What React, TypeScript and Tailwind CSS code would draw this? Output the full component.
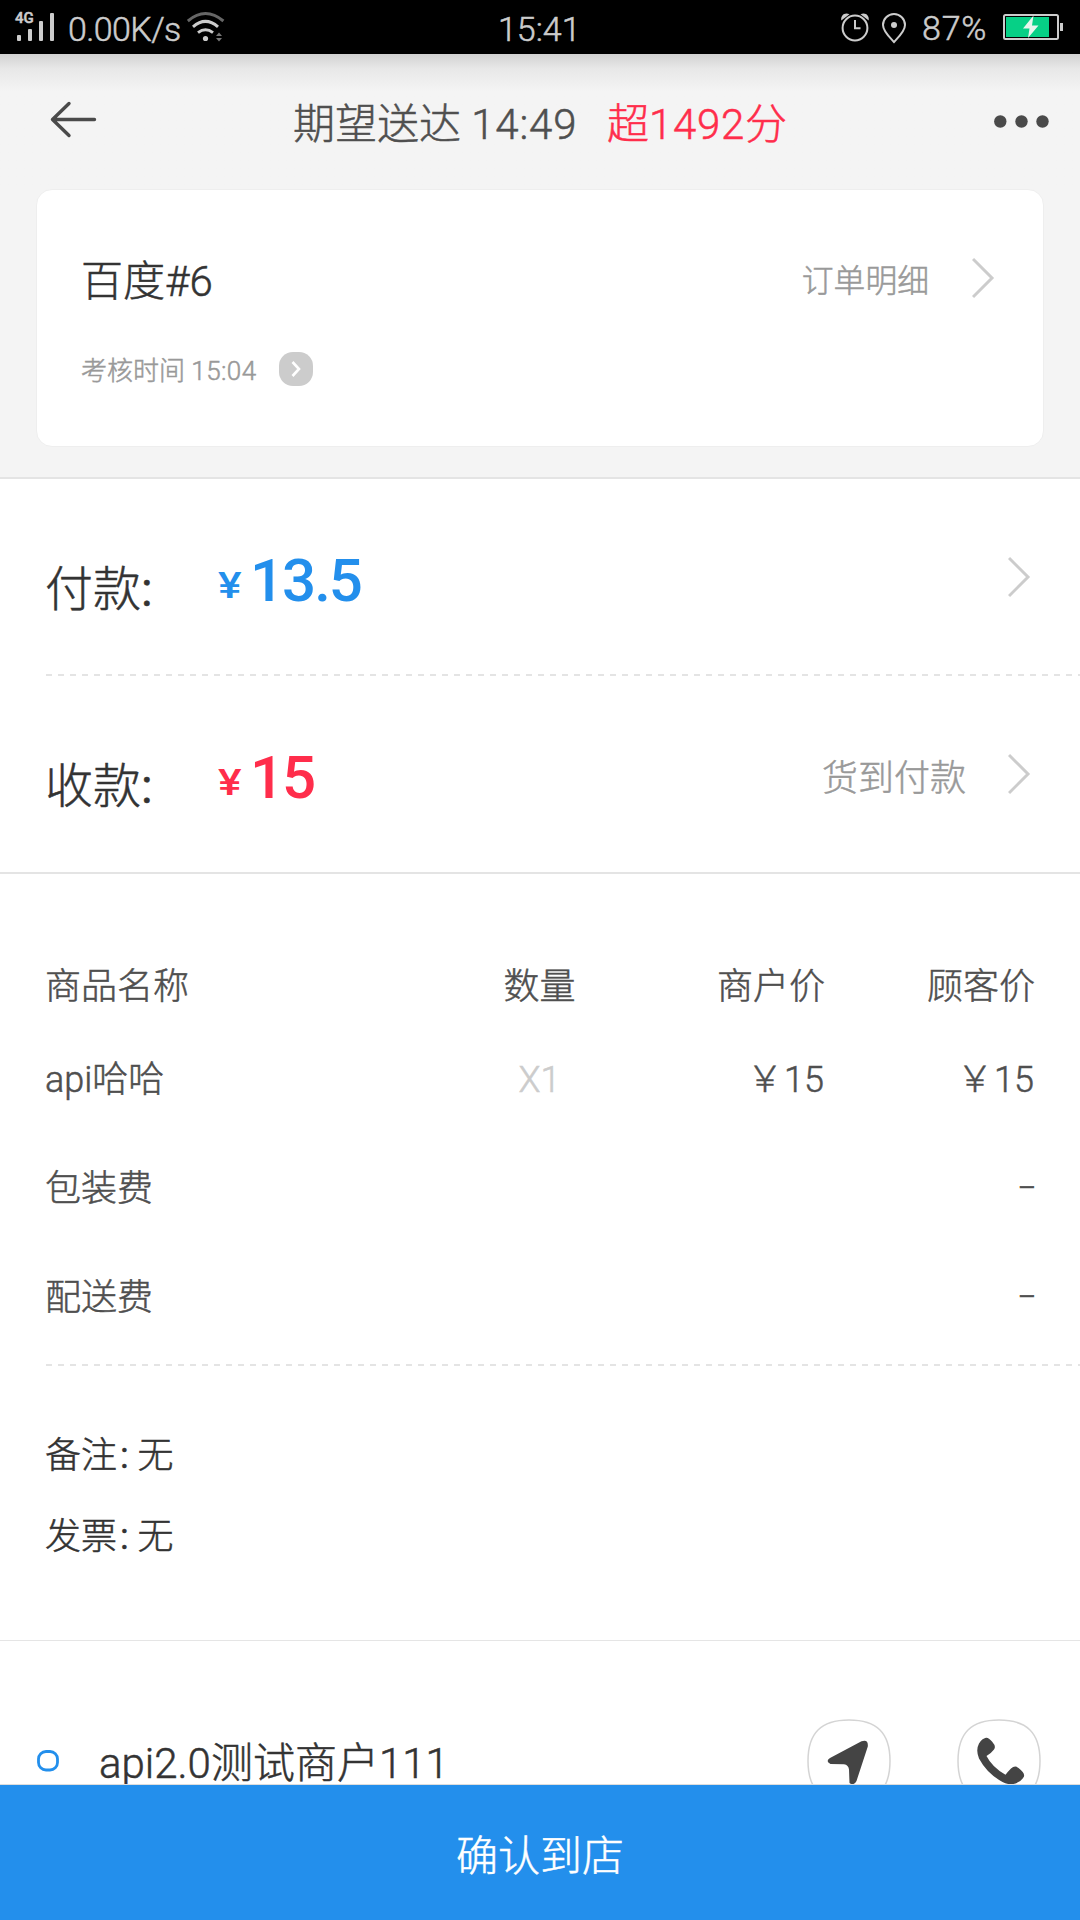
import React from "react";

function Chevron() {
  return (
    <svg width="23" height="42" viewBox="0 0 23 42" fill="none" stroke="#cccccc" strokeWidth="3">
      <path d="M1 2 L20 21 L1 40" />
    </svg>
  );
}

function SignalIcon() {
  return (
    <svg className="absolute left-0 top-0" width="60" height="54" viewBox="0 0 60 54" fill="#cccccc">
      <rect x="17" y="35" width="4" height="6" rx="1" />
      <rect x="28" y="29" width="4" height="12" rx="1" />
      <rect x="39" y="21" width="4" height="20" rx="1" />
      <rect x="50" y="13" width="4" height="28" rx="1" />
    </svg>
  );
}

function WifiIcon() {
  return (
    <svg width="38" height="54" viewBox="187 0 38 54" fill="none" stroke="#cccccc" strokeWidth="3">
      <path d="M187.8 21 Q205.5 6 223.4 21" stroke="#666666" />
      <path d="M193 26.8 Q205.5 16 218 26.8" />
      <path d="M198 32.6 Q205.5 27 213 32.6" />
      <circle cx="205.5" cy="38.5" r="2.6" fill="#cccccc" stroke="none" />
      <path d="M216 36 L219 32.6 L222 36Z M216 38 L219 41.4 L222 38Z" fill="#777777" stroke="none" />
    </svg>
  );
}

function AlarmIcon() {
  return (
    <svg width="30" height="54" viewBox="840 0 30 54" fill="none" stroke="#cccccc" strokeWidth="2">
      <circle cx="855" cy="28" r="12.4" />
      <path d="M855 20 V28.3 H860.5" />
      <path d="M841.3 20.5 C840.5 15 845 12 849.5 14.3 Z M868.7 20.5 C869.5 15 865 12 860.5 14.3 Z" fill="#cccccc" stroke="none" />
    </svg>
  );
}

function PinIcon() {
  return (
    <svg width="26" height="54" viewBox="881 0 26 54" fill="none" stroke="#cccccc" strokeWidth="2">
      <path d="M894 42 C890.5 38 883 31.5 883 25 A11 11 0 0 1 905 25 C905 31.5 897.5 38 894 42Z" />
      <circle cx="894" cy="25" r="3" fill="#cccccc" stroke="none" />
    </svg>
  );
}

function BatteryIcon() {
  return (
    <svg className="-ml-[1px]" width="62" height="54" viewBox="1003 0 62 54">
      <rect x="1005" y="15" width="54" height="24" rx="1.5" fill="none" stroke="#cccccc" strokeWidth="2" />
      <rect x="1007" y="17" width="43" height="20" fill="#06d086" />
      <rect x="1061" y="23" width="3" height="8" fill="#cccccc" />
      <path d="M1034.5 15.5 L1024 28.5 H1030.5 L1029 38 L1039.5 25.5 H1033Z" fill="#e8f5ee" />
    </svg>
  );
}

function StatusBar() {
  return (
    <div className="relative flex h-[54px] items-center bg-black text-[34px] leading-[54px] text-[#cccccc]">
      <SignalIcon />
      <span className="absolute left-[15px] top-[9px] text-[15px] leading-[18px] font-medium">4G</span>
      <span className="ml-[68px] mt-[3px] w-[119px] whitespace-nowrap tracking-[-0.6px]">0.00K/s</span>
      <WifiIcon />
      <span className="ml-[273px] mt-[4px] w-[101px]">15:41</span>
      <span className="ml-[241px] flex">
        <AlarmIcon />
      </span>
      <span className="ml-[11px]">
        <PinIcon />
      </span>
      <span className="ml-[15px] mt-[1px] w-[81px] text-[34px] tracking-[0.8px]">87%</span>
      <BatteryIcon />
    </div>
  );
}

function Header() {
  return (
    <div className="flex h-[135px] items-start bg-linear-to-b from-[#d2d2d2] via-[#e8e8e8] via-[11%] to-[#f4f4f4] to-[28%]">
      <svg className="ml-[50px] mt-[46px]" width="48" height="40" viewBox="0 0 48 40" fill="none" stroke="#4a4a4a" strokeWidth="3.4" strokeLinecap="round" strokeLinejoin="round">
        <path d="M44.5 19.5 H2.5 M19 3.5 L2.5 19.5 L19 35.5" />
      </svg>
      <div className="ml-[195px] mt-[46px] w-[314px] whitespace-nowrap text-[42px] leading-[50px] text-[#4f4f4f]">
        期望送达 <span className="tracking-[0.8px]">14:49</span>
      </div>
      <div className="mt-[46px] w-[378px] text-[42px] leading-[50px] text-[#ff2d4b]">
        超<span className="tracking-[0.7px]">1492</span>分
      </div>
      <svg className="mt-[60px]" width="66" height="16" viewBox="0 0 66 16" fill="#4a4a4a">
        <circle cx="15.3" cy="7.5" r="6.2" />
        <circle cx="36.5" cy="7.5" r="6.2" />
        <circle cx="57.5" cy="7.5" r="6.2" />
      </svg>
    </div>
  );
}

function OrderCard() {
  return (
    <div className="mx-[36px] h-[258px] rounded-[16px] border border-[#eeeeee] bg-white pl-[44px] pr-[48px] pt-[67px]">
      <div className="flex h-[50px] items-center">
        <span className="text-[42px] leading-[50px] text-[#333333]">百度#6</span>
        <span className="-mt-[3px] ml-auto mr-[43px] text-[31.8px] leading-[50px] text-[#999999]">订单明细</span>
        <span className="-mt-[8px]">
          <Chevron />
        </span>
      </div>
      <div className="mt-[45px] flex h-[34px] items-center text-[26px] leading-[34px] text-[#999999]">
        <span className="w-[198px] whitespace-nowrap pt-[3px]">
          考核时间 <span className="tracking-[0.4px]">15:04</span>
        </span>
        <span className="flex h-[34px] w-[34px] items-center justify-center rounded-[14px] bg-[#cccccc]">
          <svg width="12" height="18" viewBox="0 0 12 18" fill="none" stroke="#ffffff" strokeWidth="2.6">
            <path d="M2.5 2 L9 9 L2.5 16" />
          </svg>
        </span>
      </div>
    </div>
  );
}

function PayRow({ label, amount, color, note }: { label: string; amount: string; color: string; note?: string }) {
  return (
    <div className="flex h-[195px] items-center pl-[45px] pr-[49px]">
      <span className="mt-[26px] w-[170px] text-[48px] leading-[60px] text-[#333333]">
        {label}
        <span className="font-normal">:</span>
      </span>
      <span className={`flex items-center font-medium [-webkit-text-stroke:0px] ${color}`}>
        <span className="ml-[3px] mt-[19px] w-[32px] text-[37px] leading-[60px]">
          <span className="inline-block origin-left scale-x-[1.2]">¥</span>
        </span>
        <span className="mt-[8px] text-[60px] leading-[60px] tracking-[-2px]">{amount}</span>
      </span>
      <span className="ml-auto mr-[42px] mt-[10px] text-[36px] leading-[60px] text-[#999999]">{note}</span>
      <Chevron />
    </div>
  );
}

function DashedLine() {
  return (
    <div className="ml-[46px] h-[2px] bg-[repeating-linear-gradient(90deg,#e4e4e4_0px,#e4e4e4_6px,transparent_6px,transparent_12px)]" />
  );
}

function Dash() {
  return <span className="-mt-[2px] origin-right scale-x-[1.6]">-</span>;
}

function Price() {
  return (
    <span className="text-right">
      <span className="mr-[1px]">￥</span>15
    </span>
  );
}

function Goods() {
  return (
    <div className="px-[45px] pt-[88px] text-[36px] leading-[50px] text-[#4f4f4f]">
      <div className="grid grid-cols-[380px_229px_171px_210px] items-center">
        <span>商品名称</span>
        <span className="text-center">数量</span>
        <span className="text-right">商户价</span>
        <span className="text-right">顾客价</span>
      </div>
      <div className="mt-[43px] grid grid-cols-[380px_229px_170px_210px] items-center">
        <span>api哈哈</span>
        <span className="text-center text-[#cccccc]">X1</span>
        <Price />
        <Price />
      </div>
      <div className="mt-[59px] flex justify-between">
        <span>包装费</span>
        <Dash />
      </div>
      <div className="mt-[59px] flex justify-between">
        <span>配送费</span>
        <Dash />
      </div>
    </div>
  );
}

function Remark({ label, value }: { label: string; value: string }) {
  return (
    <div>
      {label}
      <span className="ml-[3px] font-normal">:</span> {value}
    </div>
  );
}

function RoundButton({ children }: { children: React.ReactNode }) {
  return (
    <svg width="84" height="84" viewBox="0 0 84 84" fill="none">
      <path d="M42 1 C70 1 83 14 83 42 C83 70 70 83 42 83 C14 83 1 70 1 42 C1 14 14 1 42 1Z" stroke="#d4d4d4" strokeWidth="1.5" />
      {children}
    </svg>
  );
}

function Merchant() {
  return (
    <div className="flex h-[144px] items-start overflow-hidden border-t border-[#e5e5e5] pl-[37px]">
      <svg className="mt-[109px]" width="22" height="22" viewBox="0 0 22 22" fill="none">
        <rect x="1.5" y="1.5" width="19" height="18.5" rx="7.5" stroke="#238fec" strokeWidth="2.8" />
      </svg>
      <span className="ml-[40px] mt-[98px] text-[42px] leading-[50px] text-[#333333]">api2.0测试商户111</span>
      <div className="ml-auto mr-[39px] mt-[78px] flex gap-[66px]">
        <RoundButton>
          <path d="M23 39 L54.5 22.3 Q61.5 20 60.8 27.5 L49.5 62 Q47 67 42.500 64 L42 50.5 Q41.5 46 37 45.3 L23.5 45 Q18 42.5 23 39Z" fill="#444444" />
        </RoundButton>
        <RoundButton>
          <path d="M29 18.7 Q31.5 18.3 35 22.5 Q39.5 27.5 37 30.5 Q34 34.5 29.5 37 Q35 48 48.5 55.8 Q50.5 53 54 49.5 Q58 46 61.5 49 Q68 54 67 57.5 Q64.5 62.5 58.5 64.5 Q52 66.5 45.5 63 Q30 54.5 22 39.5 Q18.5 31 22 24.5 Q25 19.5 29 18.7Z" fill="#444444" />
        </RoundButton>
      </div>
    </div>
  );
}

export default function App() {
  return (
    <div className="flex h-[1920px] w-[1080px] flex-col overflow-hidden bg-white font-[Roboto,'Noto_Sans_CJK_SC',sans-serif] font-light [-webkit-text-stroke:0.5px]">
      <StatusBar />
      <div className="h-[425px] border-b-2 border-[#e4e4e4] bg-[#f4f4f4]">
        <Header />
        <OrderCard />
      </div>
      <div className="h-[395px] border-b-2 border-[#e4e4e4]">
        <PayRow label="付款" amount="13.5" color="text-[#238fec]" />
        <DashedLine />
        <PayRow label="收款" amount="15" color="text-[#ff2d4b]" note="货到付款" />
      </div>
      <div className="h-[490px]">
        <Goods />
      </div>
      <DashedLine />
      <div className="flex h-[274px] flex-col gap-[31px] pl-[45px] pt-[65px] text-[36px] leading-[50px] text-[#333333]">
        <Remark label="备注" value="无" />
        <Remark label="发票" value="无" />
      </div>
      <Merchant />
      <button className="h-[136px] w-full border-t border-[#dddddd] bg-[#238fec] pt-[7px] text-[42px] text-white">确认到店</button>
    </div>
  );
}
